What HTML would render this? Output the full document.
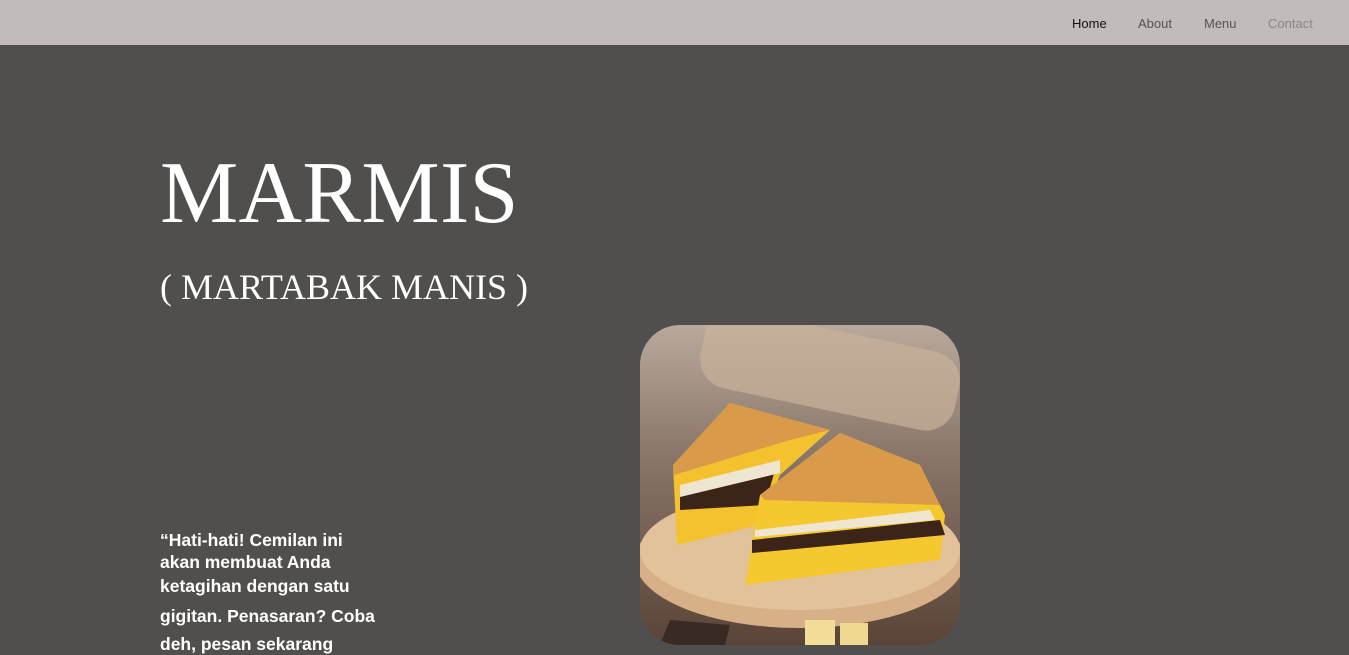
<!DOCTYPE html>
<html><head><style>
html,body{margin:0;padding:0;}
body{width:1349px;height:648px;overflow:hidden;background:#504f4d;font-family:"Liberation Sans",sans-serif;position:relative;}
.nav{position:absolute;left:0;top:0;width:1349px;height:45px;background:#c1bbbb;}
.nav a{position:absolute;top:16px;font-size:13px;text-decoration:none;}
h1{position:absolute;left:160px;top:150px;margin:0;font-family:"Liberation Serif",serif;font-weight:normal;font-size:88px;color:#fff;line-height:1;letter-spacing:0.3px;}
h2{position:absolute;left:160px;top:269px;margin:0;font-family:"Liberation Serif",serif;font-weight:normal;font-size:36px;color:#fff;line-height:1;}
.q{position:absolute;left:160px;color:#fff;font-weight:bold;font-size:17.5px;white-space:nowrap;}
.img{position:absolute;left:640px;top:325px;width:320px;height:320px;border-radius:40px;overflow:hidden;}
</style></head><body>
<div class="nav">
<a style="left:1072px;color:#111">Home</a>
<a style="left:1138px;color:#555">About</a>
<a style="left:1204px;color:#555">Menu</a>
<a style="left:1268px;color:#888">Contact</a>
</div>
<h1>MARMIS</h1>
<h2>( MARTABAK MANIS )</h2>
<div class="q" style="top:530px">“Hati-hati! Cemilan ini</div>
<div class="q" style="top:552px">akan membuat Anda</div>
<div class="q" style="top:576px">ketagihan dengan satu</div>
<div class="q" style="top:606px">gigitan. Penasaran? Coba</div>
<div class="q" style="top:634px">deh, pesan sekarang</div>
<div class="img"><svg width="320" height="320" viewBox="0 0 320 320">
<defs><linearGradient id="bg" x1="0" y1="0" x2="0" y2="1"><stop offset="0" stop-color="#b9a99c"/><stop offset="0.4" stop-color="#8a776a"/><stop offset="1" stop-color="#5a4438"/></linearGradient></defs>
<rect width="320" height="320" fill="url(#bg)"/>
<rect x="60" y="5" width="260" height="80" rx="30" fill="#c9b29a" opacity="0.7" transform="rotate(12 190 45)"/>
<ellipse cx="160" cy="235" rx="165" ry="68" fill="#d8b088"/>
<ellipse cx="160" cy="225" rx="160" ry="60" fill="#e2c29b"/>
<polygon points="33,140 90,78 190,105 140,150 120,200 37,220" fill="#f3c22e"/>
<polygon points="33,140 90,78 190,105 150,115 34,150" fill="#d99a4a"/>
<polygon points="40,165 135,145 125,180 40,185" fill="#3c2418"/>
<polygon points="40,160 140,135 140,148 40,172" fill="#efe6d2"/>
<polygon points="120,170 200,108 280,140 305,190 300,235 105,260" fill="#f5c830"/>
<polygon points="120,170 200,108 280,140 300,180 125,175" fill="#d99a4a"/>
<polygon points="112,215 300,195 305,210 112,228" fill="#3c2418"/>
<polygon points="115,205 290,185 295,195 115,212" fill="#efe6d2"/>
<rect x="165" y="295" width="30" height="30" fill="#f2dc98"/>
<rect x="200" y="298" width="28" height="25" fill="#f0d890"/>
<polygon points="30,295 90,300 85,320 20,320" fill="#3a2a24"/>
</svg></div>
</body></html>
